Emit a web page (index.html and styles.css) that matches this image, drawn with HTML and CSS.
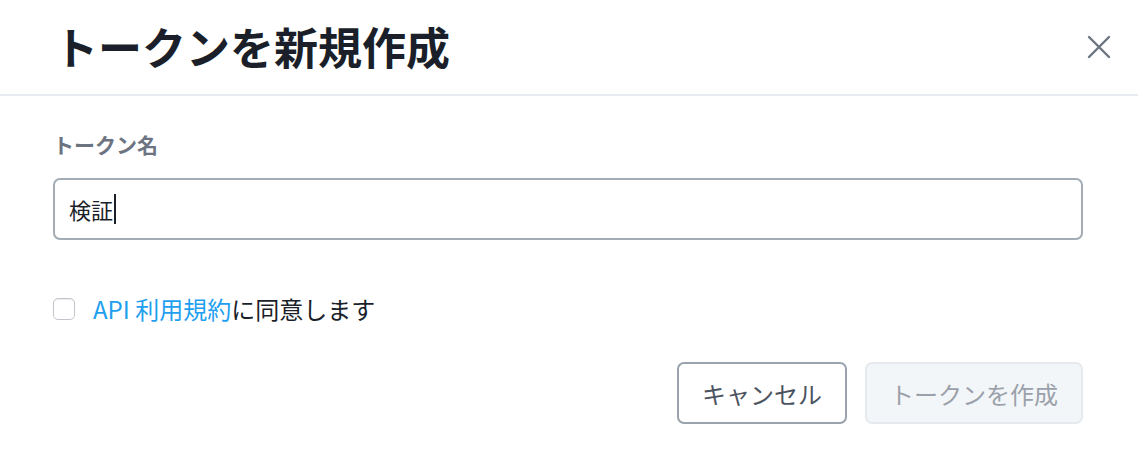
FILE: index.html
```html
<!DOCTYPE html>
<html lang="ja">
<head>
<meta charset="utf-8">
<link rel="stylesheet" href="styles.css">
</head>
<body>
<div class="modal">
  <header class="modal-header">
    <h1 class="modal-title">トークンを新規作成</h1>
    <button class="close-btn" aria-label="閉じる">
      <svg width="26" height="26" viewBox="0 0 26 26"><path d="M3 3 L23 23 M23 3 L3 23" stroke="#6b7480" stroke-width="2.4" stroke-linecap="round"/></svg>
    </button>
  </header>
  <div class="modal-body">
    <label class="field-label">トークン名</label>
    <div class="text-input"><span>検証</span><span class="caret"></span></div>
    <div class="agree-row">
      <span class="checkbox"></span>
      <span class="agree-text"><a class="link">API 利用規約</a>に同意します</span>
    </div>
    <div class="actions">
      <button class="btn btn-cancel">キャンセル</button>
      <button class="btn btn-create">トークンを作成</button>
    </div>
  </div>
</div>
</body>
</html>
```

FILE: styles.css
```css
html, body {
  margin: 0;
  padding: 0;
  background: #ffffff;
  font-family: "Noto Sans CJK JP", "Noto Sans", sans-serif;
}
.modal {
  width: 1138px;
  height: 464px;
  overflow: hidden;
}
.modal-header {
  border-bottom: 2px solid #e8ebef;
  display: flex;
  align-items: center;
  justify-content: space-between;
  padding: 0 26px 0 54px;
  box-sizing: border-box;
  height: 96px;
}
.modal-title {
  margin: 0 0 2px;
  font-size: 44px;
  font-weight: 700;
  color: #1a1f29;
  line-height: 1;
}
.close-btn {
  background: none;
  border: 0;
  padding: 0;
  width: 26px;
  height: 26px;
  display: flex;
}
.modal-body {
  padding: 34px 55px 0 53px;
  display: flex;
  flex-direction: column;
}
.field-label {
  font-size: 21px;
  font-weight: 700;
  color: #6b7480;
  line-height: 28px;
}
.text-input {
  margin-top: 20px;
  height: 62px;
  box-sizing: border-box;
  border: 2px solid #a3abb5;
  border-radius: 7px;
  display: flex;
  align-items: center;
  padding-left: 14px;
  font-size: 22px;
  color: #1a1f29;
}
.caret {
  display: inline-block;
  width: 2px;
  height: 30px;
  background: #1a1f29;
  margin-left: 1px;
}
.agree-row {
  margin-top: 54px;
  height: 30px;
  display: flex;
  align-items: center;
  gap: 18px;
}
.checkbox {
  width: 20px;
  height: 20px;
  border: 1px solid #c2c6cc;
  border-radius: 5px;
  box-shadow: inset 0 1px 1px rgba(0,0,0,0.08);
  background: #fff;
}
.agree-text {
  font-size: 24px;
  color: #1a1f29;
  line-height: 30px;
}
.link {
  color: #1ea0ef;
}
.actions {
  margin-top: 38px;
  display: flex;
  justify-content: flex-end;
  gap: 18px;
}
.btn {
  height: 62px;
  box-sizing: border-box;
  border-radius: 7px;
  font-family: inherit;
  font-size: 24px;
  padding: 0;
}
.btn-cancel {
  width: 170px;
  background: #fff;
  border: 2px solid #9aa3ad;
  color: #4b5360;
}
.btn-create {
  width: 218px;
  background: #f3f6f8;
  border: 2px solid #e6eaee;
  color: #9aa1aa;
}
```
